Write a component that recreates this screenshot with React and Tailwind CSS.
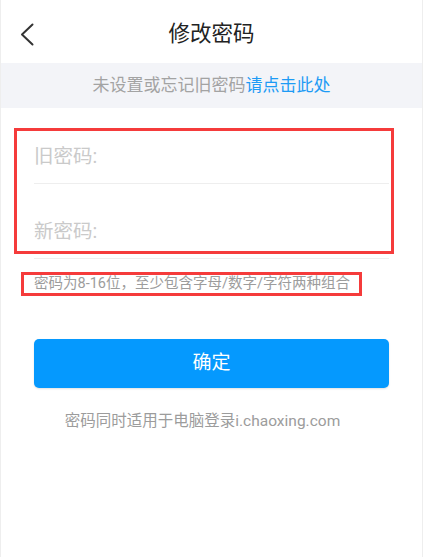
import React from "react";

const font = {
  fontFamily: 'Roboto, "Noto Sans CJK SC", sans-serif',
};

function BackArrow() {
  return (
    <svg width="14" height="23" viewBox="0 0 14 23" fill="none">
      <polyline
        points="12.5,1.5 2,11.5 12.5,21.5"
        stroke="#333333"
        strokeWidth="2"
        strokeLinecap="round"
        strokeLinejoin="round"
      />
    </svg>
  );
}

export default function App() {
  return (
    <div
      className="relative h-[557px] w-full overflow-hidden border-x border-[#eeeeee] bg-white"
      style={font}
    >
      {/* header */}
      <div className="grid h-[63px] grid-cols-[60px_1fr_60px] items-center pt-[6px]">
        <button className="flex items-center pl-[19px]">
          <BackArrow />
        </button>
        <h1 className="text-center text-[21.5px] text-[#222222]">修改密码</h1>
        <div />
      </div>

      {/* banner */}
      <div className="flex h-[45px] items-center justify-center bg-[#f3f4f8] text-[17px] text-[#a3a3a3]">
        未设置或忘记旧密码<span className="text-[#1d9bf5]">请点击此处</span>
      </div>

      {/* form */}
      <div className="px-[33px]">
        <div className="flex h-[76px] items-end border-b border-[#eeeeee] pb-[12px] text-[19.5px] text-[#cacaca]">
          旧密码:
        </div>
        <div className="flex h-[75px] items-end border-b border-[#eeeeee] pb-[12px] text-[19.5px] text-[#cacaca]">
          新密码:
        </div>
        <p className="mt-[15px] text-[14.5px] leading-[20px] text-[#9c9c9c]">
          密码为8-16位，至少包含字母/数字/字符两种组合
        </p>
        <button className="mt-[45px] flex h-[49px] w-full items-center justify-center rounded-[5px] bg-[#0599fe] text-[19px] text-white shadow-[0_1px_2px_rgba(0,0,0,0.12)]">
          确定
        </button>
        <p className="mt-[22px] pr-[18px] text-center text-[15.5px] leading-[22px] text-[#9c9c9c]">
          密码同时适用于电脑登录i.chaoxing.com
        </p>
      </div>

      {/* annotation boxes */}
      <div className="pointer-events-none absolute left-[13px] top-[128px] h-[126px] w-[380px] border-[3px] border-[#f53b3b]" />
      <div className="pointer-events-none absolute left-[20px] top-[272px] h-[24px] w-[341px] border-[3px] border-[#f53b3b]" />
    </div>
  );
}
